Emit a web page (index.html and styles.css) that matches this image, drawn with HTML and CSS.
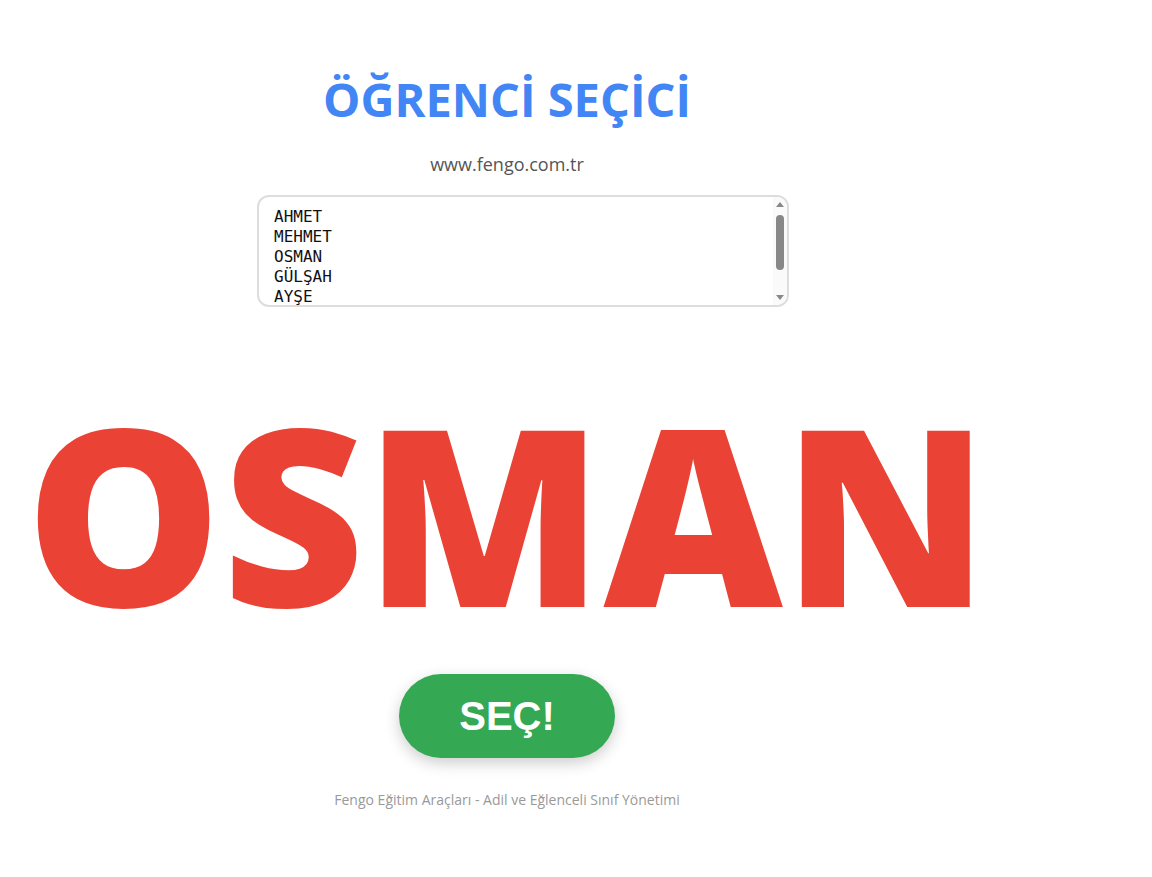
FILE: index.html
```html
<!DOCTYPE html>
<html lang="tr">
<head>
  <meta charset="UTF-8">
  <title>Öğrenci Seçici</title>
  <link rel="stylesheet" href="styles.css">
</head>
<body>
  <div class="container">
    <h1 class="title">ÖĞRENCİ SEÇİCİ</h1>
    <div class="site">www.fengo.com.tr</div>
    <div class="names-box">
      <textarea class="names" spellcheck="false">AHMET
MEHMET
OSMAN
GÜLŞAH
AYŞE
FATMA
ALİ</textarea>
      <!-- classic scrollbar drawn over the list -->
      <div class="scrollbar">
        <span class="arrow up"></span>
        <span class="thumb"></span>
        <span class="arrow down"></span>
      </div>
    </div>
    <div class="winner">OSMAN</div>
    <button class="pick-btn">SEÇ!</button>
    <div class="footer">Fengo Eğitim Araçları - Adil ve Eğlenceli Sınıf Yönetimi</div>
  </div>
</body>
</html>
```

FILE: styles.css
```css
body { margin: 0; background: #fff; font-family: "Open Sans", "Noto Sans", sans-serif; }
.container { width: 1014px; display: flex; flex-direction: column; align-items: center; padding-top: 69px; }
.title { margin: 0; font-size: 47px; line-height: 60px; font-weight: 700; color: #4285f4; }
.site { margin-top: 23px; font-size: 18px; line-height: 24px; color: #555; }
.names-box { position: relative; margin: 19px 0 0 32px; }
.names { display: block; box-sizing: border-box; width: 532px; height: 112px; padding: 10px 15px; border: 2px solid #ddd; border-radius: 12px; font-family: "DejaVu Sans Mono", "Liberation Mono", monospace; font-size: 16px; line-height: 20px; color: #111; resize: none; outline: none; overflow: hidden; }
.scrollbar { position: absolute; top: 2px; right: 2px; bottom: 2px; width: 14px; background: #fafafa; border-radius: 0 10px 10px 0; display: flex; flex-direction: column; align-items: center; }
.arrow { width: 0; height: 0; border-left: 4px solid transparent; border-right: 4px solid transparent; }
.arrow.up { margin-top: 5px; border-bottom: 5px solid #888; }
.arrow.down { margin-top: auto; margin-bottom: 5px; border-top: 5px solid #888; }
.thumb { margin-top: 8px; width: 8px; height: 55px; background: #888; border-radius: 4px; }
.winner { margin-top: 81px; font-size: 247px; line-height: 247px; font-weight: 800; color: #ea4335; white-space: nowrap; }
.pick-btn { margin-top: 39px; width: 216px; height: 84px; border: none; border-radius: 42px; background: #34a853; color: #fff; font-family: "Liberation Sans", Arial, sans-serif; font-size: 40px; font-weight: 700; cursor: pointer; box-shadow: 0 5px 15px rgba(0, 0, 0, 0.2); }
.footer { margin-top: 32px; font-size: 14px; line-height: 20px; color: #999; }
```
